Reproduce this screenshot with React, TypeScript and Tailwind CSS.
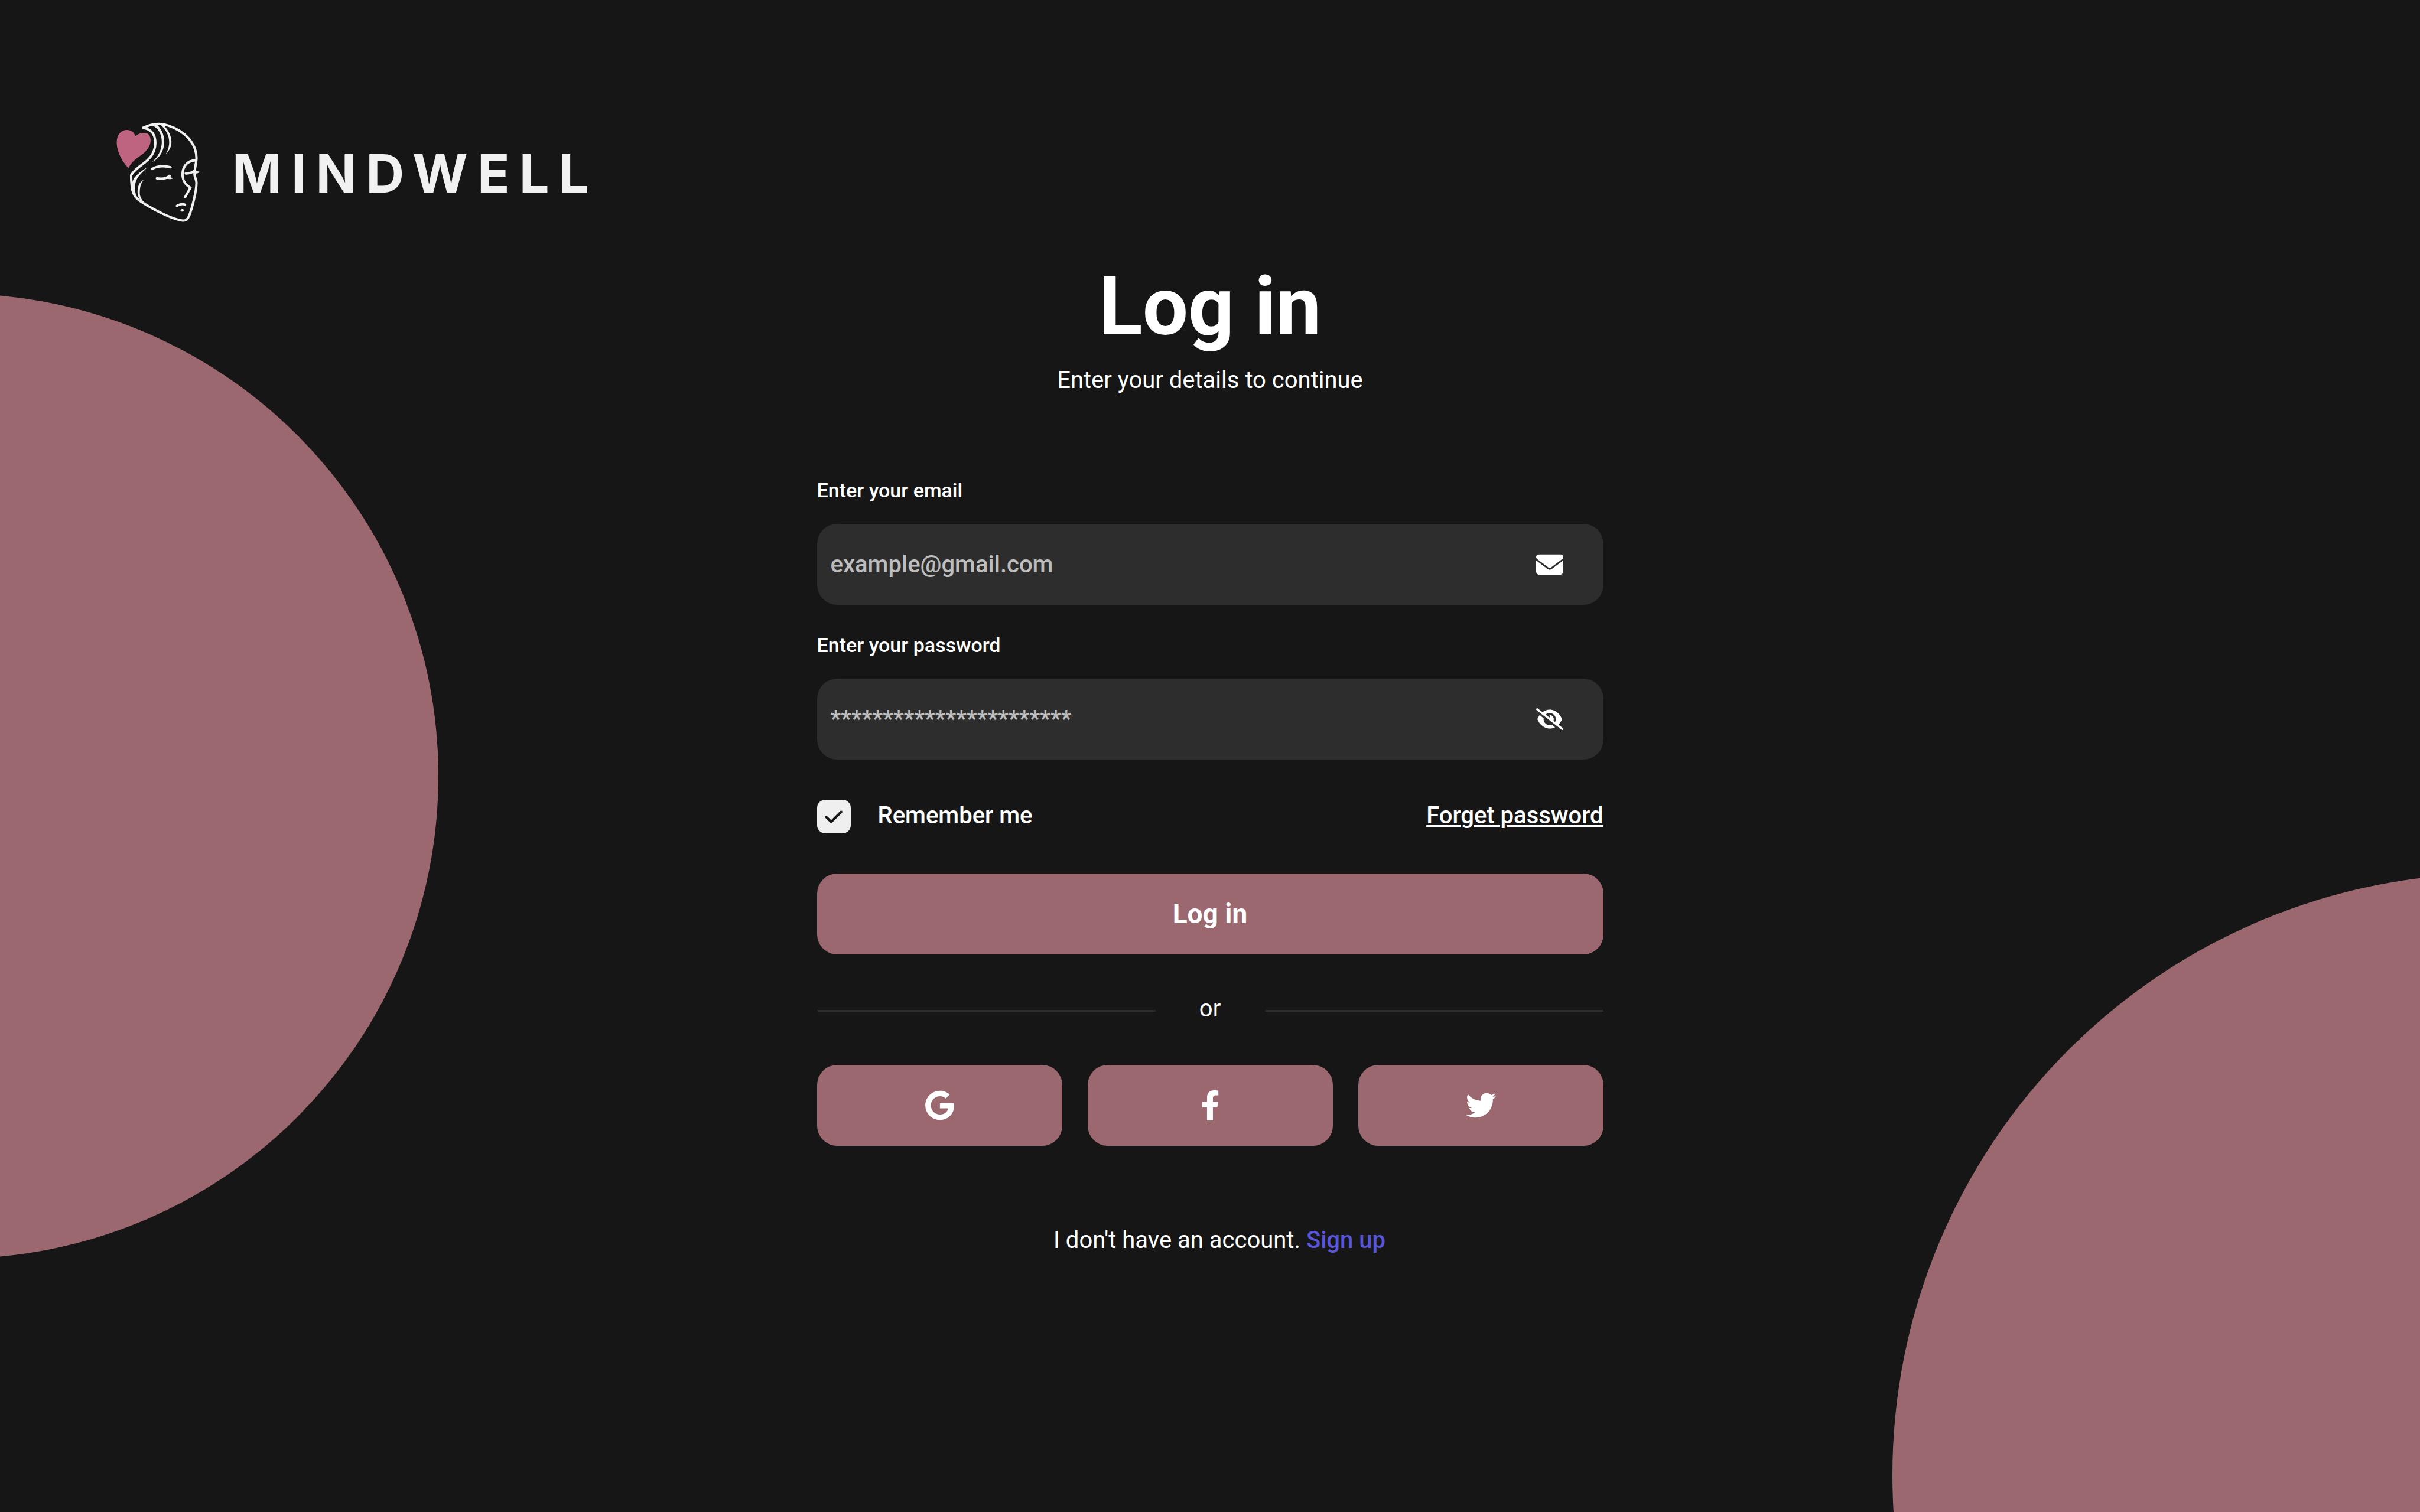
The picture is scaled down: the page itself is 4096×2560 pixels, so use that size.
import React from "react";
import { FaFacebookF, FaGoogle, FaTwitter } from "react-icons/fa";
import { FaCheck, FaEnvelope, FaEyeSlash } from "react-icons/fa6";

function LogoMark() {
  return (
    <svg
      viewBox="0 0 780 840"
      className="h-[199px] w-[185px] shrink-0"
      fill="none"
      stroke="#f1f1f1"
      strokeWidth="17"
      strokeLinecap="round"
      strokeLinejoin="round"
      aria-hidden="true"
    >
      {/* heart */}
      <path
        fill="#bf6480"
        stroke="none"
        d="M166 391C120 345 82 270 82 208C82 150 115 118 155 118C185 118 205 135 216 162C235 145 255 139 280 139C308 139 325 160 324 195C323 240 290 275 250 303C210 330 185 355 166 391Z"
      />
      {/* head outline */}
      <path d="M270 103C330 74 395 66 450 87C565 125 652 210 652 322C651 352 637 400 638 440C641 462 652 472 652 496C651 560 622 672 600 730C588 758 578 768 552 766C470 756 330 678 258 632C200 596 186 560 185 442C205 405 250 375 280 353C330 315 358 265 358 212C358 160 335 112 270 103Z" />
      {/* hair strands */}
      <g fill="#f1f1f1" stroke="none">
        <path d="M270 96L350 76L300 101Z" />
        <path d="M335 86C385 108 403 155 404 200C405 255 380 310 335 347C390 322 422 262 422 200C421 150 400 105 365 78Z" />
        <path d="M390 76C438 120 456 160 457 205C457 240 445 270 432 292C460 265 475 235 473 200C470 150 445 110 415 82Z" />
        <path d="M302 383C250 420 193 452 191 510C194 560 212 604 244 624C218 592 211 560 213 520C217 450 270 422 302 383Z" />
        <path d="M275 475C240 490 230 530 231 565C232 600 250 625 290 648C252 612 245 584 247 560C248 520 258 495 275 475Z" />
        <path d="M440 462L460 452L472 459L489 461C478 470 460 471 440 468Z" />
        <path d="M622 424L640 400L650 412L674 417C664 430 648 433 634 429Z" />
      </g>
      {/* face details */}
      <path d="M336 397C372 374 430 374 467 385" />
      <path d="M369 464C405 469 440 464 460 446" />
      <path d="M646 335C582 337 552 385 552 437C553 480 576 514 609 531L570 599" />
      <path d="M575 429C604 432 625 420 642 408" />
      <path d="M512 661C534 649 556 643 570 653" />
      <ellipse cx="550" cy="693" rx="12" ry="9" fill="#f1f1f1" stroke="none" />
    </svg>
  );
}

type FieldProps = {
  id: string;
  label: string;
  type: string;
  placeholder: string;
  icon: React.ReactNode;
};

function Field({ id, label, type, placeholder, icon }: FieldProps) {
  return (
    <div className="flex flex-col gap-[37px]">
      <label htmlFor={id} className="text-[34px] leading-10 font-medium">
        {label}
      </label>
      <div className="flex h-[137px] items-center rounded-[34px] bg-[#2d2d2d] pr-[68px] pl-[23px]">
        <input
          id={id}
          type={type}
          placeholder={placeholder}
          className="h-full min-w-0 flex-1 bg-transparent text-[40px] leading-[47px] font-medium outline-none placeholder:text-[#bdbdbd]"
        />
        {icon}
      </div>
    </div>
  );
}

const socials = [
  { name: "Google", icon: <FaGoogle className="size-[51px]" /> },
  { name: "Facebook", icon: <FaFacebookF className="size-[51px]" /> },
  { name: "Twitter", icon: <FaTwitter className="size-[51px]" /> },
];

export default function App() {
  return (
    <div className="relative min-h-screen overflow-hidden bg-[#161616] font-['Roboto',sans-serif] text-white">
      <div className="absolute top-[497px] -left-[892px] size-[1634px] rounded-full bg-[#9c6870]" />
      <div className="absolute -right-[1144px] -bottom-[956px] size-[2037px] rounded-full bg-[#9c6870]" />

      <header className="relative flex items-center gap-[30px] pt-[192px] pl-[178px]">
        <LogoMark />
        <span className="pt-1 font-['Inter',sans-serif] text-[90px] leading-none font-bold tracking-[0.18em] text-[#f1f1f1]">
          MINDWELL
        </span>
      </header>

      <main className="relative mx-auto mt-12 w-full max-w-[1331px]">
        <h1 className="text-center text-[137px] leading-[160px] font-bold">Log in</h1>
        <p className="mt-[21px] text-center text-[40px] leading-[47px]">
          Enter your details to continue
        </p>

        <form className="mt-[143px]" onSubmit={(e) => e.preventDefault()}>
          <div className="flex flex-col gap-12">
            <Field
              id="email"
              label="Enter your email"
              type="email"
              placeholder="example@gmail.com"
              icon={<FaEnvelope className="size-[46px]" />}
            />
            <Field
              id="password"
              label="Enter your password"
              type="password"
              placeholder="***********************"
              icon={
                <button type="button" aria-label="Show password">
                  <FaEyeSlash className="h-[37px] w-[46px]" />
                </button>
              }
            />
          </div>

          <div className="mt-[68px] flex items-start justify-between text-[40px] leading-[53px] font-medium">
            <div className="flex items-start gap-[46px]">
              <span className="grid size-[57px] place-items-center">
                <input
                  id="remember"
                  type="checkbox"
                  defaultChecked
                  className="peer col-start-1 row-start-1 size-[57px] appearance-none rounded-[14px] bg-[#efefef]"
                />
                <FaCheck className="pointer-events-none invisible col-start-1 row-start-1 size-[34px] text-[#161616] peer-checked:visible" />
              </span>
              <label htmlFor="remember">Remember me</label>
            </div>
            <a href="#forgot" className="underline decoration-[3px] underline-offset-[3px]">
              Forget password
            </a>
          </div>

          <button
            type="submit"
            className="mt-[68px] h-[137px] w-full rounded-[34px] bg-[#9c6870] text-[46px] font-bold"
          >
            Log in
          </button>
        </form>

        <div className="mt-[68px] flex items-center">
          <span className="h-[3px] flex-1 rounded-full bg-[#2d2d2d]" />
          <span className="mb-2 w-[185px] text-center text-[40px] leading-[47px]">or</span>
          <span className="h-[3px] flex-1 rounded-full bg-[#2d2d2d]" />
        </div>

        <div className="mt-16 grid grid-cols-3 gap-[43px]">
          {socials.map((s) => (
            <button
              key={s.name}
              type="button"
              aria-label={`Log in with ${s.name}`}
              className="grid h-[137px] place-items-center rounded-[34px] bg-[#9c6870]"
            >
              {s.icon}
            </button>
          ))}
        </div>

        <p className="mt-[136px] pl-8 text-center text-[40px] leading-[47px]">
          I don't have an account.{" "}
          <a href="#signup" className="font-medium text-[#5955d9]">
            Sign up
          </a>
        </p>
      </main>
    </div>
  );
}
